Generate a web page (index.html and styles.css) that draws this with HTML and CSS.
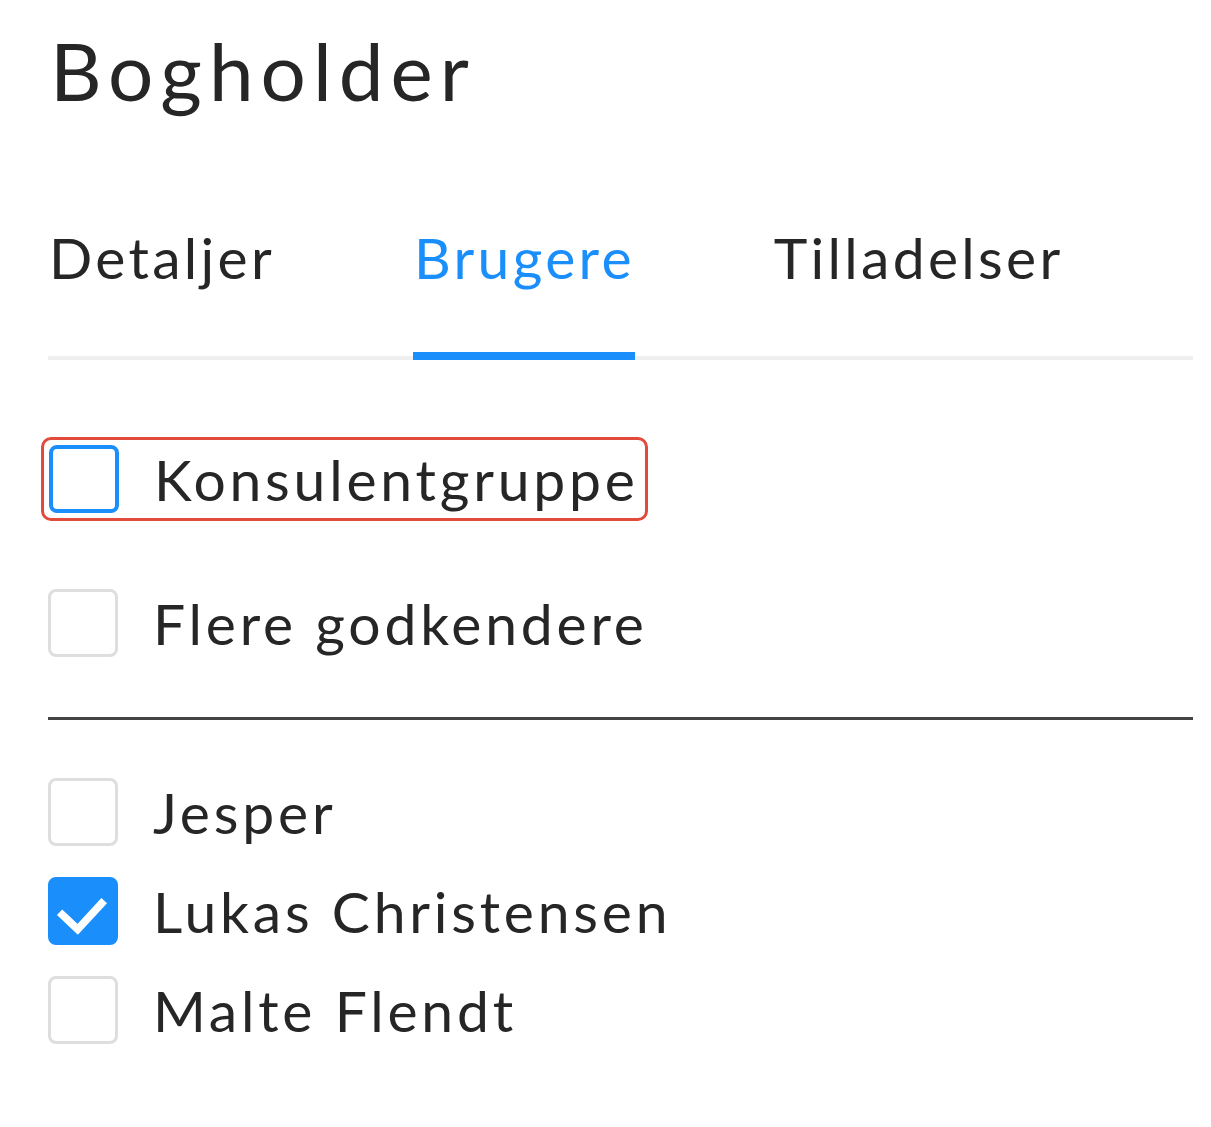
FILE: index.html
```html
<!DOCTYPE html>
<html lang="da">
<head>
<meta charset="utf-8">
<title>Bogholder</title>
<link rel="stylesheet" href="styles.css">
</head>
<body>
<main class="panel">
  <h1 class="title">Bogholder</h1>
  <nav class="tabs">
    <div class="tab">Detaljer</div>
    <div class="tab active">Brugere</div>
    <div class="tab">Tilladelser</div>
  </nav>
  <section class="options">
    <label class="row focused">
      <span class="box box-focus"></span>
      <span class="label">Konsulentgruppe</span>
    </label>
    <label class="row">
      <span class="box"></span>
      <span class="label">Flere godkendere</span>
    </label>
  </section>
  <hr class="divider">
  <section class="users">
    <label class="row user">
      <span class="box"></span>
      <span class="label">Jesper</span>
    </label>
    <label class="row user">
      <span class="box checked">
        <svg viewBox="0 0 70 70" width="70" height="70"><path d="M15 38 L31 53 L56 26" fill="none" stroke="#fff" stroke-width="8" stroke-linecap="square"/></svg>
      </span>
      <span class="label">Lukas Christensen</span>
    </label>
    <label class="row user">
      <span class="box"></span>
      <span class="label">Malte Flendt</span>
    </label>
  </section>
</main>
</body>
</html>
```
FILE: styles.css
```css
html, body {
  margin: 0;
  padding: 0;
  background: #fff;
}
body {
  font-family: Lato, "Noto Sans", sans-serif;
  color: #262626;
}
.panel {
  padding: 15px 18px 0 48px;
}
.title {
  margin: 0;
  font-size: 80px;
  font-weight: 400;
  line-height: 110px;
  padding-left: 2px;
  letter-spacing: 7px;
}
.tabs {
  display: flex;
  gap: 138px;
  margin-top: 102px;
  border-bottom: 4px solid #efefef;
}
.tab {
  font-size: 57px;
  line-height: 60px;
  letter-spacing: 3.3px;
  padding: 0 0 65px 1px;
  margin-bottom: -4px;
  border-bottom: 8px solid transparent;
}
.tab.active {
  color: #1a8ffb;
  border-bottom-color: #1a8ffb;
}
.options {
  padding-top: 77px;
  display: flex;
  flex-direction: column;
  gap: 68px;
}
.row {
  display: flex;
  align-items: center;
  gap: 35px;
}
.focused {
  align-self: flex-start;
  margin-left: -7px;
  padding: 5px 6px 5px 5px;
  border: 3px solid #e24a3c;
  border-radius: 10px;
}
.box {
  box-sizing: border-box;
  width: 70px;
  height: 68px;
  flex: none;
  border: 3px solid #dedede;
  border-radius: 8px;
  display: flex;
}
.box-focus {
  border: 4px solid #1a8ffb;
}
.box.checked {
  background: #1a8ffb;
  border-color: #1a8ffb;
}
.box svg {
  display: block;
  margin: -3px 0 0 -3px;
}
.label {
  font-size: 57px;
  line-height: 60px;
  letter-spacing: 3.8px;
}
.divider {
  margin: 60px 0 0 0;
  border: 0;
  border-top: 3px solid #444;
}
.users {
  padding-top: 58px;
  display: flex;
  flex-direction: column;
  gap: 31px;
}
```
